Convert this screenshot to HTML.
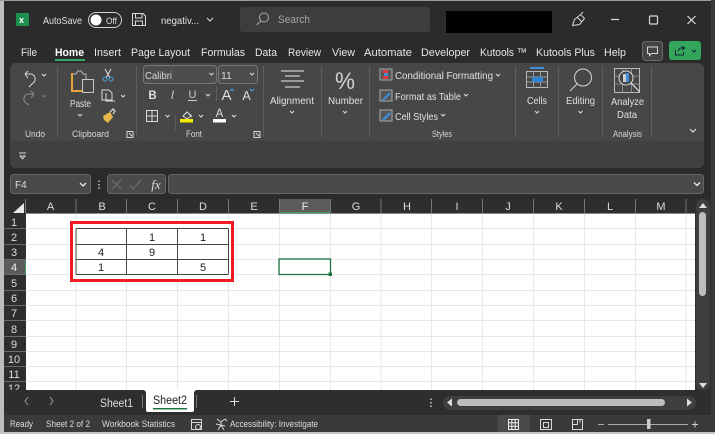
<!DOCTYPE html>
<html><head><meta charset="utf-8">
<style>
html,body{margin:0;padding:0;background:#2b2b2b;width:715px;height:434px;overflow:hidden}
svg{display:block;filter:blur(.3px)}
text{font-family:"Liberation Sans",sans-serif;fill:#e6e6e6;font-size:11px}
.c{text-anchor:middle}
.h{fill:#dcdcdc;font-size:11px}
.l{fill:#d8d8d8;font-size:9.5px}
.n{fill:#e0e0e0;font-size:10.5px}
.t{fill:#222;font-size:11px}
.s{fill:#ddd;font-size:9px}
.ic{fill:none;stroke:#d8d8d8;stroke-width:1}
.ch{fill:none;stroke:#dcdcdc;stroke-width:1}
.g{stroke:#e8e8e8;stroke-width:1}
.k{stroke:#444;stroke-width:1}
</style></head><body>
<svg width="715" height="434" viewBox="0 0 715 434" xmlns="http://www.w3.org/2000/svg">
<rect width="715" height="434" fill="#2b2b2b"/>
<rect x="0" y="0" width="4" height="434" fill="#bdbdbd"/>
<rect x="0" y="0" width="715" height="1" fill="#9a9a9a"/>
<rect x="711" y="0" width="4" height="434" fill="#3a3a3a"/>
<rect x="0" y="432" width="715" height="2" fill="#c4c4c4"/>

<!-- title bar -->
<rect x="16" y="13" width="13" height="13" rx="1" fill="#1d8f4e"/>
<text x="19" y="23" style="font-size:9px;font-weight:bold;fill:#fff">x</text>
<text x="43" y="24" textLength="39" lengthAdjust="spacingAndGlyphs" style="font-size:10.500px;fill:#e0e0e0">AutoSave</text>
<rect x="88.500" y="12.500" width="33" height="15" rx="7.500" fill="#2b2b2b" stroke="#cfcfcf"/>
<circle cx="96" cy="20" r="5.500" fill="#fff"/>
<text x="106" y="24" textLength="11" lengthAdjust="spacingAndGlyphs" style="font-size:9.500px;fill:#ddd">Off</text>
<path class="ic" d="M132.500 13.500H143L145.500 16V25.500H132.500ZM135.500 13.500V18H142V13.500M135.500 25.500V21H142.500V25.500"/>
<text x="161" y="24" textLength="38" lengthAdjust="spacingAndGlyphs" style="font-size:10.500px;fill:#e0e0e0">negativ...</text>
<path class="ch" d="M207 18l3 3 3-3"/>
<rect x="240" y="7" width="190" height="25" rx="3" fill="#3d3d3d"/>
<circle cx="264" cy="17.500" r="4.500" fill="none" stroke="#aaa"/>
<path fill="none" stroke="#aaa" d="M261 21l-4.500 4"/>
<text x="278" y="23" textLength="32" lengthAdjust="spacingAndGlyphs" style="font-size:11px;fill:#a8a8a8">Search</text>
<rect x="446" y="11" width="106" height="22" fill="#000"/>
<path class="ic" d="M572.500 25.500l2-6 6-5 4 4-5 6-7 1zM577 17l5 5M581 14l2-2"/>
<path d="M611 19.500h8" stroke="#ddd" stroke-width="1.200"/>
<rect x="649.500" y="16" width="8" height="8" rx="1" fill="none" stroke="#d8d8d8" stroke-width="1.200"/>
<path d="M687.500 16l8 8M695.500 16l-8 8" stroke="#ddd" stroke-width="1.200"/>

<!-- menu -->
<text x="21" y="56" textLength="16" lengthAdjust="spacingAndGlyphs" style="fill:#e6e6e6">File</text>
<text x="55" y="56" textLength="29" lengthAdjust="spacingAndGlyphs" style="fill:#fff;font-weight:bold">Home</text>
<text x="94" y="56" textLength="27" lengthAdjust="spacingAndGlyphs">Insert</text>
<text x="131" y="56" textLength="59" lengthAdjust="spacingAndGlyphs">Page Layout</text>
<text x="201" y="56" textLength="44" lengthAdjust="spacingAndGlyphs">Formulas</text>
<text x="255" y="56" textLength="22" lengthAdjust="spacingAndGlyphs">Data</text>
<text x="288" y="56" textLength="33" lengthAdjust="spacingAndGlyphs">Review</text>
<text x="332" y="56" textLength="23" lengthAdjust="spacingAndGlyphs">View</text>
<text x="364" y="56" textLength="48" lengthAdjust="spacingAndGlyphs">Automate</text>
<text x="421" y="56" textLength="49" lengthAdjust="spacingAndGlyphs">Developer</text>
<text x="480" y="56" textLength="47" lengthAdjust="spacingAndGlyphs">Kutools ™</text>
<text x="536" y="56" textLength="59" lengthAdjust="spacingAndGlyphs">Kutools Plus</text>
<text x="604" y="56" textLength="22" lengthAdjust="spacingAndGlyphs">Help</text>
<rect x="55" y="59" width="30" height="2" fill="#35a866"/>
<rect x="642.500" y="41.500" width="20" height="19" rx="3" fill="#444" stroke="#6b6b6b"/>
<path class="ic" d="M647.500 47h10v6.500h-6l-2 2v-2h-2z"/>
<rect x="669" y="41" width="32" height="19" rx="3" fill="#33a65c"/>
<path d="M675.500 50v5h8v-3M678 51l2-3h4M682 46l2.500 2-2.500 2" fill="none" stroke="#123" stroke-width="1"/>
<path d="M692 50l2 2 2-2" fill="none" stroke="#123" stroke-width="1"/>

<!-- ribbon -->
<rect x="10" y="63" width="694" height="105" rx="6" fill="#474747"/>
<path d="M10 141h694v21a6 6 0 0 1-6 6H16a6 6 0 0 1-6-6z" fill="#404040"/>
<g fill="#5e5e5e">
<rect x="57" y="66" width="1" height="71"/>
<rect x="136" y="66" width="1" height="71"/>
<rect x="263" y="66" width="1" height="71"/>
<rect x="321" y="66" width="1" height="71"/>
<rect x="369" y="66" width="1" height="71"/>
<rect x="515" y="66" width="1" height="71"/>
<rect x="558" y="66" width="1" height="71"/>
<rect x="602" y="66" width="1" height="71"/>
<rect x="651" y="66" width="1" height="71"/>
<rect x="216" y="86" width="1" height="15"/>
<rect x="175" y="115" width="1" height="15"/>
</g>

<!-- undo -->
<path class="ic" d="M25 74h6a5 5 0 0 1 2 9l-4 4M25 74l3-3M25 74l3 4" stroke-width="1.100"/>
<path d="M42 74l2 2 2-2" class="ch"/>
<path d="M34 94h-6a5 5 0 0 0-2 9l3 2M34 94l-3-3M34 94l-3 4" fill="none" stroke="#8f8f8f"/>
<path d="M42 95l2 2 2-2" fill="none" stroke="#777"/>
<text x="25" y="137" class="l" textLength="20" lengthAdjust="spacingAndGlyphs">Undo</text>

<!-- clipboard -->
<path d="M73 74h-1v17h10" fill="none" stroke="#e8a33a" stroke-width="2"/>
<path d="M73 74h3l2-3h3l2 3h3v5" fill="none" stroke="#bbb"/>
<rect x="82.500" y="79.500" width="11" height="13" fill="#474747" stroke="#c8c8c8"/>
<text x="70" y="107" class="n" textLength="21" lengthAdjust="spacingAndGlyphs">Paste</text>
<path class="ch" d="M78 114l2 2 2-2"/>
<path d="M105 69l5 9M111 69l-5 9" stroke="#ddd" fill="none"/>
<circle cx="105" cy="79" r="2" fill="none" stroke="#4aa3e0"/><circle cx="111" cy="79" r="2" fill="none" stroke="#4aa3e0"/>
<path class="ic" d="M102 90h7l3 3v7h-10zM106 93v8h9"/>
<path class="ch" d="M121 95l2 2 2-2"/>
<path d="M103 116l7-4 3 5-5 6-4-3z" fill="#e8b54a"/><path d="M110 112l3-3 2 2-2 3" fill="none" stroke="#ccc" stroke-width="1.400"/>
<text x="72" y="137" class="l" textLength="37" lengthAdjust="spacingAndGlyphs">Clipboard</text>
<path class="ic" d="M127 131.500h6v6h-6zM129 133l3 3" stroke-width=".8"/>

<!-- font -->
<rect x="143.500" y="65.500" width="73" height="18" rx="3" fill="#4d4d4d" stroke="#777"/>
<text x="145" y="79" textLength="27" lengthAdjust="spacingAndGlyphs" style="font-size:10.500px;fill:#d8d8d8">Calibri</text>
<path class="ch" d="M209.500 73l2 2 2-2"/>
<rect x="218.500" y="65.500" width="39" height="18" rx="3" fill="#4d4d4d" stroke="#777"/>
<text x="221" y="79" style="font-size:10.500px;fill:#d8d8d8">11</text>
<path class="ch" d="M250 73l2 2 2-2"/>
<text x="152.500" y="99" class="c" style="font-size:11.500px;font-weight:bold;fill:#ddd">B</text>
<text x="172.500" y="99" class="c" style="font-size:11.500px;font-style:italic;fill:#ccc">I</text>
<text x="192.500" y="98" class="c" style="font-size:11px;fill:#ccc">U</text>
<rect x="188" y="100" width="9" height="1" fill="#ccc"/>
<path class="ch" d="M206 94l2 2 2-2"/>
<text x="226.500" y="100" class="c" style="font-size:15px;fill:#ddd">A</text>
<path d="M230 91l2-2 2 2" fill="none" stroke="#4aa3e0"/>
<text x="246.500" y="100" class="c" style="font-size:12.500px;fill:#ddd">A</text>
<path d="M250 89l2 2 2-2" fill="none" stroke="#4aa3e0"/>
<path class="ic" d="M146.500 110.500h11v11h-11zM152 110.500v11M146.500 116h11" stroke-width="1.100"/>
<path class="ch" d="M165.500 115l2 2 2-2"/>
<path d="M183 116l4-4 4 4-4 3zM190 114l2 3" fill="none" stroke="#ddd"/>
<rect x="180" y="119" width="13" height="3.500" fill="#f4ec00"/>
<path class="ch" d="M199 115l2 2 2-2"/>
<text x="219.500" y="117" class="c" style="font-size:11.500px;fill:#ddd">A</text>
<rect x="213" y="119" width="13" height="3.500" fill="#fff"/>
<path class="ch" d="M232 115l2 2 2-2"/>
<text x="186" y="137" class="l" textLength="16" lengthAdjust="spacingAndGlyphs">Font</text>
<path class="ic" d="M254 131.500h6v6h-6zM256 133l3 3" stroke-width=".8"/>

<!-- alignment -->
<path d="M281 71h23M285 76h15M281 81h23M285 87h15" stroke="#ccc" stroke-width="1.200"/>
<text x="270" y="104" class="n" textLength="44" lengthAdjust="spacingAndGlyphs">Alignment</text>
<path class="ch" d="M290 111l2 2 2-2"/>
<!-- number -->
<text x="335" y="89" textLength="20" lengthAdjust="spacingAndGlyphs" style="font-size:24px;fill:#d4d4d4">%</text>
<text x="328" y="104" class="n" textLength="35" lengthAdjust="spacingAndGlyphs">Number</text>
<path class="ch" d="M343 111l2 2 2-2"/>

<!-- styles -->
<rect x="380" y="69" width="12" height="11" fill="#555" stroke="#aaa"/>
<rect x="383" y="70" width="5" height="3" fill="#e23a3a"/><rect x="383" y="76" width="5" height="3" fill="#e23a3a"/><rect x="384" y="73" width="4" height="3" fill="#3f8fd8"/>
<text x="395" y="79" class="n" textLength="98" lengthAdjust="spacingAndGlyphs">Conditional Formatting</text>
<path class="ch" d="M496 74l2 2 2-2"/>
<rect x="380" y="90" width="12" height="11" fill="#555" stroke="#aaa"/>
<path d="M383 100l7-7" stroke="#3f8fd8" stroke-width="2"/>
<text x="395" y="100" class="n" textLength="66" lengthAdjust="spacingAndGlyphs">Format as Table</text>
<path class="ch" d="M464 94l2 2 2-2"/>
<rect x="380" y="110" width="12" height="11" fill="#555" stroke="#aaa"/>
<path d="M383 120l7-7" stroke="#3f8fd8" stroke-width="2.500"/>
<text x="395" y="120" class="n" textLength="43" lengthAdjust="spacingAndGlyphs">Cell Styles</text>
<path class="ch" d="M441 114l2 2 2-2"/>
<text x="432" y="137" class="l" textLength="20" lengthAdjust="spacingAndGlyphs">Styles</text>

<!-- cells -->
<rect x="530" y="67" width="14" height="2" fill="#3f8fd8"/>
<rect x="526.500" y="71.500" width="21" height="16" fill="none" stroke="#bbb"/>
<path d="M526.500 77h21M526.500 82h21M533.500 71.500v16M540.500 71.500v16" stroke="#999"/>
<rect x="532" y="77" width="11" height="5" fill="#2f86d6"/>
<text x="527" y="104" class="n" textLength="20" lengthAdjust="spacingAndGlyphs">Cells</text>
<path class="ch" d="M535 111l2 2 2-2"/>
<!-- editing -->
<circle cx="583" cy="77.500" r="8.500" class="ic"/>
<path class="ic" d="M577 84l-7 7"/>
<text x="566" y="104" class="n" textLength="29" lengthAdjust="spacingAndGlyphs">Editing</text>
<path class="ch" d="M578.500 111l2 2 2-2"/>
<!-- analyze -->
<rect x="614.500" y="68.500" width="25" height="24" fill="none" stroke="#bbb"/>
<path d="M614.500 76h25M614.500 84h25M622.500 68.500v24M631.500 68.500v24" stroke="#8a8a8a"/>
<circle cx="626" cy="78" r="7" fill="#474747" stroke="#ddd"/>
<rect x="623" y="74" width="3" height="8" fill="#ccc"/><rect x="626" y="73" width="3" height="9" fill="#3f8fd8"/>
<path d="M631 83l9 9" stroke="#ddd" stroke-width="1.200"/>
<text x="611" y="105" class="n" textLength="33" lengthAdjust="spacingAndGlyphs">Analyze</text>
<text x="617" y="118" class="n" textLength="20" lengthAdjust="spacingAndGlyphs">Data</text>
<text x="613" y="137" class="l" textLength="29" lengthAdjust="spacingAndGlyphs">Analysis</text>
<path d="M690 129l3 3 3-3" fill="none" stroke="#ddd" stroke-width="1.200"/>
<path class="ic" d="M19 153h7M20 156h5l-2.500 3z"/>

<!-- formula bar -->
<rect x="10.500" y="174.500" width="80" height="19" rx="3" fill="#4a4a4a" stroke="#666"/>
<text x="15" y="188" style="font-size:10px;fill:#ddd">F4</text>
<path d="M80 183l3 3 3-3" fill="none" stroke="#eee" stroke-width="1.300"/>
<path d="M99 180.500v1.500M99 184v1.500M99 187.500v1.500" stroke="#ddd" stroke-width="1.300"/>
<rect x="107.500" y="174.500" width="58" height="19" rx="3" fill="#4a4a4a" stroke="#666"/>
<path d="M112 180l9 9M121 180l-9 9M130 185l3 4 8-9" fill="none" stroke="#737373"/>
<text x="156" y="189" class="c" style="font-family:'Liberation Serif',serif;font-style:italic;font-size:13px;fill:#ddd">fx</text>
<rect x="168.500" y="174.500" width="535" height="19" rx="3" fill="#4a4a4a" stroke="#666"/>
<path d="M694 182.500l3 3 3-3" fill="none" stroke="#eee" stroke-width="1.300"/>

<!-- headers -->
<rect x="4" y="199" width="707" height="15" fill="#2e2e2e"/>
<rect x="279" y="199" width="52" height="14" fill="#5c5c5c"/>
<rect x="279" y="212" width="52" height="1" fill="#3c9a5c"/>
<path d="M24 203v10H13z" fill="#e8e8e8"/>
<g stroke="#777"><path d="M25.500 199v14M76 199v14M126.500 199v14M177.500 199v14M228.500 199v14M279.500 199v14M330.500 199v14M381 199v14M431.500 199v14M482.500 199v14M533.500 199v14M584.500 199v14M635.500 199v14M686 199v14"/></g>
<rect x="26" y="213" width="669" height="1" fill="#8a8a8a"/>
<text x="50.500" y="210" class="h c">A</text><text x="102" y="210" class="h c">B</text><text x="152" y="210" class="h c">C</text><text x="203" y="210" class="h c">D</text><text x="254" y="210" class="h c">E</text><text x="305" y="210" class="h c" style="fill:#eee">F</text><text x="356" y="210" class="h c">G</text><text x="407" y="210" class="h c">H</text><text x="457" y="210" class="h c">I</text><text x="508" y="210" class="h c">J</text><text x="559" y="210" class="h c">K</text><text x="610" y="210" class="h c">L</text><text x="661" y="210" class="h c">M</text>

<!-- sheet -->
<rect x="26" y="214" width="669" height="176" fill="#fff"/>
<rect x="4" y="214" width="22" height="176" fill="#2e2e2e"/>
<rect x="4" y="259" width="22" height="16" fill="#5c5c5c"/>
<rect x="25" y="259" width="1" height="16" fill="#3c9a5c"/>
<g stroke="#6a6a6a"><path d="M4 228.500h22M4 244.500h22M4 259.500h22M4 274.500h22M4 290.500h22M4 305.500h22M4 320.500h22M4 336.500h22M4 351.500h22M4 366.500h22M4 381.500h22"/></g>
<text x="14" y="226" class="h c">1</text><text x="14" y="241" class="h c">2</text><text x="14" y="256" class="h c">3</text><text x="14" y="271" class="h c" style="fill:#eee">4</text><text x="14" y="287" class="h c">5</text><text x="14" y="302" class="h c">6</text><text x="14" y="317" class="h c">7</text><text x="14" y="333" class="h c">8</text><text x="14" y="348" class="h c">9</text><text x="14" y="363" class="h c">10</text><text x="14" y="378" class="h c">11</text><text x="14" y="392" class="h c">12</text>
<g class="g"><path d="M26 228.500h669M26 244.500h669M26 259.500h669M26 274.500h669M26 290.500h669M26 305.500h669M26 320.500h669M26 336.500h669M26 351.500h669M26 366.500h669M26 381.500h669"/>
<path d="M76 214v176M126.500 214v176M177.500 214v176M228.500 214v176M279.500 214v176M330.500 214v176M381 214v176M431.500 214v176M482.500 214v176M533.500 214v176M584.500 214v176M635.500 214v176M686 214v176"/></g>

<!-- table -->
<rect x="71.500" y="222.500" width="161" height="58" fill="#fff" stroke="#ee1c25" stroke-width="3"/>
<path class="k" d="M76 228.500h152.500M76 244.500h152.500M76 259.500h152.500M76 274.500h152.500M76 228.500v46M126.500 228.500v46M177.500 228.500v46M228.500 228.500v46"/>
<text x="152" y="241" class="t c">1</text><text x="203" y="241" class="t c">1</text>
<text x="101" y="256" class="t c">4</text><text x="152" y="256" class="t c">9</text>
<text x="101" y="271" class="t c">1</text><text x="203" y="271" class="t c">5</text>

<!-- selection -->
<rect x="279" y="259" width="51.500" height="15.500" fill="none" stroke="#217346" stroke-width="1.300"/>
<rect x="328.500" y="272.500" width="3.500" height="3.500" fill="#217346"/>

<!-- vscroll -->
<rect x="695" y="199" width="16" height="191" fill="#2e2e2e"/>
<rect x="696" y="199" width="14" height="191" rx="7" fill="#3e3e3e"/>
<path d="M699 208l4-5 4 5z" fill="#ddd"/>
<rect x="699" y="212" width="7" height="84" rx="3.500" fill="#bdbdbd"/>
<path d="M699 383l4 5 4-5z" fill="#ddd"/>

<!-- tabs -->
<rect x="4" y="390" width="707" height="25" fill="#2e2e2e"/>
<path fill="none" stroke="#999" d="M28 397l-3 4 3 4"/><path fill="none" stroke="#999" d="M50 397l3 4-3 4"/>
<text x="100" y="407" textLength="33" lengthAdjust="spacingAndGlyphs" style="font-size:11.500px;fill:#ddd">Sheet1</text>
<path d="M143 390a3 3 0 0 1 3 3v17a2 2 0 0 0 2 2h44a2 2 0 0 0 2-2v-17a3 3 0 0 1 3-3z" fill="#fff"/>
<text x="153" y="404" textLength="34" lengthAdjust="spacingAndGlyphs" style="font-size:11.500px;fill:#222">Sheet2</text>
<rect x="153" y="408" width="34" height="1.500" fill="#217346"/>
<rect x="142" y="395" width="1" height="13" fill="#777"/><rect x="196" y="395" width="1" height="13" fill="#777"/>
<path d="M230 401.500h9M234.500 397v9" stroke="#ddd"/>
<path d="M431 398.500v1.500M431 402v1.500M431 405.500v1.500" stroke="#ccc" stroke-width="1.500"/>
<rect x="443" y="396" width="253" height="14" rx="7" fill="#3e3e3e"/>
<path d="M452 398.500l-5 4 5 4z" fill="#ddd"/>
<rect x="457" y="399" width="208" height="7" rx="3.500" fill="#bdbdbd"/>
<path d="M687 398.500l5 4-5 4z" fill="#ddd"/>

<!-- status -->
<rect x="4" y="415" width="707" height="17" fill="#3a3a3a"/>
<text x="10" y="427" class="s" textLength="23" lengthAdjust="spacingAndGlyphs">Ready</text>
<text x="46" y="427" class="s" textLength="44" lengthAdjust="spacingAndGlyphs">Sheet 2 of 2</text>
<text x="102" y="427" class="s" textLength="73" lengthAdjust="spacingAndGlyphs">Workbook Statistics</text>
<text x="230" y="427" class="s" textLength="88" lengthAdjust="spacingAndGlyphs">Accessibility: Investigate</text>
<path class="ic" d="M191.500 419.500h10v10h-10zM191.500 422.500h10"/><circle cx="198" cy="427" r="2.500" fill="#3a3a3a" stroke="#ddd"/>
<path class="ic" d="M217 419l4 3 4-3M221 422v3l-3 5M221 425l3 5M216 424l9 2M225 419l2 2"/>
<rect x="498" y="415" width="32" height="17" fill="#4a4a4a"/>
<path d="M508.500 419.500h10v10h-10zM508.500 422.800h10M508.500 426.200h10M511.800 419.500v10M515.200 419.500v10" fill="none" stroke="#eee"/>
<path class="ic" d="M540.500 419.500h11v10h-11zM543.500 422.500h5v5h-5z"/>
<path class="ic" d="M572.500 419.500h10v10h-10zM572.500 424.500h5v-5M580 419.500v3"/>
<path d="M598 424.500h6M608 424.500h80" stroke="#aaa"/>
<rect x="647" y="419" width="3.500" height="10" fill="#ccc"/>
<path d="M692 424.500h6M695 421.500v6" stroke="#ccc"/>
</svg>
</body></html>
